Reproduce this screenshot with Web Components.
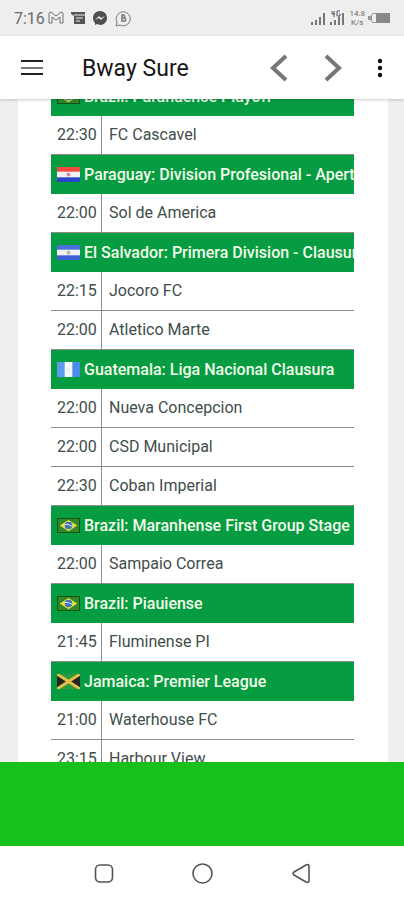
<!DOCTYPE html>
<html lang="en">
<head>
<meta charset="utf-8">
<meta name="viewport" content="width=device-width, initial-scale=1">
<title>Bway Sure</title>
<style>
    html, body {
        height: 100%;
        margin: 0;
    }

    body {
        font-family: Roboto, "Noto Sans", sans-serif;
        background: #f0eeef;
        color: #414d4b;
    }
</style>
</head>
<body>
<bway-app>
    <status-bar slot="status" time="7:16" speed="14.8"></status-bar>
    <app-bar slot="bar">Bway Sure</app-bar>
    <league-block flag="brazil" name="Brazil: Paranaense Playoff" fixtures="22:30 FC Cascavel"></league-block>
    <league-block flag="paraguay" name="Paraguay: Division Profesional - Apertura" fixtures="22:00 Sol de America"></league-block>
    <league-block flag="salvador" name="El Salvador: Primera Division - Clausura" fixtures="22:15 Jocoro FC|22:00 Atletico Marte"></league-block>
    <league-block flag="guatemala" name="Guatemala: Liga Nacional Clausura" fixtures="22:00 Nueva Concepcion|22:00 CSD Municipal|22:30 Coban Imperial"></league-block>
    <league-block flag="brazil" name="Brazil: Maranhense First Group Stage First" fixtures="22:00 Sampaio Correa"></league-block>
    <league-block flag="brazil" name="Brazil: Piauiense" fixtures="21:45 Fluminense PI"></league-block>
    <league-block flag="jamaica" name="Jamaica: Premier League" fixtures="21:00 Waterhouse FC|23:15 Harbour View"></league-block>
    <nav-bar slot="nav"></nav-bar>
</bway-app>

<script>
const FLAGS = {
    brazil: `
        <rect width="24" height="16" fill="#174d16"/>
        <rect x="1" y="1" width="22" height="14" fill="#2f8a2a"/>
        <path d="M12 2 21 8 12 14 3 8Z" fill="#f0e23c"/>
        <circle cx="12" cy="8" r="4" fill="#3f74c4"/>
        <path d="M8 7q4-1 8 2" fill="none" stroke="#dfe9f5"/>`,
    paraguay: `
        <rect width="24" height="16" fill="#f4f2f4"/>
        <rect width="24" height="5" fill="#ee4a40"/>
        <rect y="11" width="24" height="5" fill="#2a45c8"/>
        <circle cx="12" cy="8" r="2" fill="#e08088"/>`,
    salvador: `
        <rect width="24" height="16" fill="#eef1f8"/>
        <rect width="24" height="5" fill="#4c6fdc"/>
        <rect y="11" width="24" height="5" fill="#3f60d2"/>
        <circle cx="12" cy="8" r="2" fill="#b7bf86"/>`,
    guatemala: `
        <rect width="24" height="16" fill="#f5f8fb"/>
        <rect width="8" height="16" fill="#5c9bf0"/>
        <rect x="16" width="8" height="16" fill="#4a8cea"/>
        <circle cx="12" cy="8" r="2" fill="#e8f0f0"/>`,
    jamaica: `
        <rect width="24" height="16" fill="#2f9a3c"/>
        <path d="M0 0 12 8 0 16ZM24 0 12 8 24 16Z" fill="#26241f"/>
        <path d="M0 0 24 16M24 0 0 16" stroke="#e6c04a" stroke-width="3"/>`
};

class StatusBar extends HTMLElement {
    constructor() {
        super();
        this.attachShadow({ mode: 'open' });
    }

    connectedCallback() {
        this.shadowRoot.innerHTML = `
            <style>
                :host {
                    display: flex;
                    align-items: center;
                    justify-content: space-between;
                    height: 36px;
                    padding: 0 14px;
                    background: #eeeeee;
                    color: #6a6a6a;
                }
                .group {
                    display: flex;
                    align-items: center;
                    gap: 3px;
                }
                .notices {
                    display: flex;
                    align-items: center;
                    gap: 7px;
                }
                .time {
                    font-size: 16px;
                }
                .speed {
                    font-size: 8px;
                    line-height: 9px;
                    text-align: center;
                }
                svg {
                    display: block;
                }
            </style>
            <div class="group">
                <span class="time">${this.getAttribute('time')}</span>
                <div class="notices">
                    <svg width="16" height="14" viewBox="0 0 16 14" fill="none" stroke="#6f6f6f"><path d="M1 2v10h3V6l4 3 4-3v6h3V2l-2-1-5 4-5-4Z"/></svg>
                    <svg width="14" height="14" viewBox="0 0 14 14"><path d="M0 1h14v12H3V5L0 3Z" fill="#555"/><path d="M3 4h11M5 7h7M5 10h4" stroke="#eee"/></svg>
                    <svg width="16" height="16" viewBox="0 0 16 16"><path d="M8 1c4 0 7 3 7 7s-3 7-7 7l-3-1-2 1v-2C2 12 1 10 1 8c0-4 3-7 7-7Z" fill="#4d4d4d"/><path d="m3 10 4-4 2 2 4-2-4 4-2-2Z" fill="#eee"/></svg>
                    <svg width="17" height="17" viewBox="0 0 17 17" fill="none" stroke="#777"><path d="M1 16 2 12a7 7 0 1 1 3 3Z"/><path d="M7 5h2a2 2 0 0 1 0 3H7ZM7 8h3a2 2 0 0 1 0 3H7Z" stroke-width="1.5"/></svg>
                </div>
            </div>
            <div class="group">
                <svg width="36" height="16" viewBox="0 0 36 16"><path d="M2 12v3M6 10v5M10 7v8M14 3v12M21 12v3M25 10v5M29 7v8M33 3v12" stroke="#777" stroke-width="2"/><path d="M22 1v3h3M24 1v6M30 1h-3v5h3V4h-1" fill="none" stroke="#555"/></svg>
                <span class="speed">${this.getAttribute('speed')}<br>K/s</span>
                <svg width="22" height="12" viewBox="0 0 22 12"><path d="M0 4h3v4H0Z" fill="#999"/><rect x="3.5" y="1.5" width="18" height="9" rx="2" fill="#eee" stroke="#999"/><path d="M8 1h14v10H8Z" fill="#888"/></svg>
            </div>
        `;
    }
}

class AppBar extends HTMLElement {
    constructor() {
        super();
        this.attachShadow({ mode: 'open' });
        this.shadowRoot.innerHTML = `
            <style>
                :host {
                    display: flex;
                    align-items: center;
                    box-sizing: border-box;
                    height: 63px;
                    padding: 0 12px;
                    background: #fff;
                    color: #151515;
                    box-shadow: 0 1px 3px rgba(0, 0, 0, 0.2);
                    position: relative;
                    z-index: 1;
                }
                h1 {
                    flex: 1;
                    margin: 3px 0 0 30px;
                    font-size: 23px;
                    line-height: 28px;
                    font-weight: 450;
                    white-space: nowrap;
                }
                button {
                    display: block;
                    padding: 0;
                    border: 0;
                    background: none;
                }
                .arrows {
                    display: flex;
                    gap: 14px;
                    margin-right: 15px;
                }
                svg {
                    display: block;
                }
            </style>
            <button aria-label="Menu">
                <svg width="40" height="40" viewBox="0 0 40 40" stroke-width="2"><path d="M9 13h22M9 26h22" stroke="#222"/><path d="M9 20h22" stroke="#777"/></svg>
            </button>
            <h1><slot></slot></h1>
            <div class="arrows">
                <button aria-label="Back"><svg width="40" height="40" viewBox="0 0 40 40" fill="none" stroke="#767676" stroke-width="4"><path d="M27 8 14 20l13 12"/></svg></button>
                <button aria-label="Forward"><svg width="40" height="40" viewBox="0 0 40 40" fill="none" stroke="#767676" stroke-width="4"><path d="m13 8 13 12-13 12"/></svg></button>
            </div>
            <button aria-label="More">
                <svg width="24" height="40" viewBox="0 0 24 40" fill="#111"><circle cx="12" cy="13" r="2.2"/><circle cx="12" cy="20" r="2.2"/><circle cx="12" cy="27" r="2.2"/></svg>
            </button>
        `;
    }
}

class LeagueBlock extends HTMLElement {
    constructor() {
        super();
        this.attachShadow({ mode: 'open' });
    }

    connectedCallback() {
        const rows = this.getAttribute('fixtures').split('|').map(item => {
            const cut = item.indexOf(' ');
            return `<tr><td class="time">${item.slice(0, cut)}</td><td>${item.slice(cut + 1)}</td></tr>`;
        });

        this.shadowRoot.innerHTML = `
            <style>
                :host {
                    display: block;
                }
                table {
                    width: 100%;
                    table-layout: fixed;
                    border-collapse: separate;
                    border-spacing: 0;
                    font-size: 16px;
                    line-height: 20px;
                }
                .time-col {
                    width: 51px;
                }
                th, td {
                    box-sizing: border-box;
                    height: 39px;
                    padding: 0 6px;
                    text-align: left;
                    white-space: nowrap;
                    overflow: hidden;
                }
                th {
                    padding-right: 0;
                    background: #059c42;
                    color: #f3fbe9;
                    font-weight: 500;
                }
                td {
                    padding-left: 7px;
                    border-bottom: 1px solid #8c8c8c;
                }
                td.time {
                    padding: 0 0 0 6px;
                    border-right: 1px solid #8c8c8c;
                }
                .head {
                    display: flex;
                    align-items: center;
                    gap: 4px;
                }
                svg {
                    display: block;
                    flex: none;
                }
            </style>
            <table>
                <colgroup><col class="time-col"><col></colgroup>
                <thead>
                    <tr><th colspan="2"><div class="head">
                        <svg width="23" height="15" viewBox="0 0 24 16" preserveAspectRatio="none">${FLAGS[this.getAttribute('flag')]}</svg>
                        <span>${this.getAttribute('name')}</span>
                    </div></th></tr>
                </thead>
                <tbody>${rows.join('')}</tbody>
            </table>
        `;
    }
}

class NavBar extends HTMLElement {
    constructor() {
        super();
        this.attachShadow({ mode: 'open' });
        this.shadowRoot.innerHTML = `
            <style>
                :host {
                    display: flex;
                    align-items: center;
                    justify-content: center;
                    gap: 75px;
                    height: 54px;
                    background: #fff;
                }
                button {
                    display: block;
                    padding: 0;
                    border: 0;
                    background: none;
                }
                svg {
                    display: block;
                }
            </style>
            <button aria-label="Recent apps"><svg width="24" height="24" viewBox="0 0 24 24" fill="none" stroke="#555" stroke-width="1.6"><rect x="4.5" y="4" width="17" height="17" rx="4.5"/></svg></button>
            <button aria-label="Home"><svg width="24" height="24" viewBox="0 0 24 24" fill="none" stroke="#555" stroke-width="1.6"><circle cx="12.5" cy="12.5" r="9.5"/></svg></button>
            <button aria-label="Go back"><svg width="24" height="24" viewBox="0 0 24 24" fill="none" stroke="#555" stroke-width="1.6" stroke-linejoin="round"><path d="M17 4q3-1 3 1v15q0 2-3 1L5 14q-2-1.5 0-3Z"/></svg></button>
        `;
    }
}

class BwayApp extends HTMLElement {
    constructor() {
        super();
        this.attachShadow({ mode: 'open' });
        this.shadowRoot.innerHTML = `
            <style>
                :host {
                    display: flex;
                    flex-direction: column;
                    height: 100vh;
                }
                main {
                    flex: 1;
                    min-height: 0;
                    overflow-y: auto;
                    scrollbar-width: none;
                }
                .card {
                    margin: 0 16px 0 18px;
                    padding: 0 34px 0 33px;
                    background: #fff;
                }
                .banner {
                    flex: none;
                    height: 84px;
                    background: #17c01a;
                }
            </style>
            <slot name="status"></slot>
            <slot name="bar"></slot>
            <main><div class="card"><slot></slot></div></main>
            <div class="banner"></div>
            <slot name="nav"></slot>
        `;
    }
}

customElements.define('status-bar', StatusBar);
customElements.define('app-bar', AppBar);
customElements.define('league-block', LeagueBlock);
customElements.define('nav-bar', NavBar);
customElements.define('bway-app', BwayApp);

// open the list part way down its first league
document.querySelector('bway-app').shadowRoot.querySelector('main').scrollTop = 22;
</script>
</body>
</html>
